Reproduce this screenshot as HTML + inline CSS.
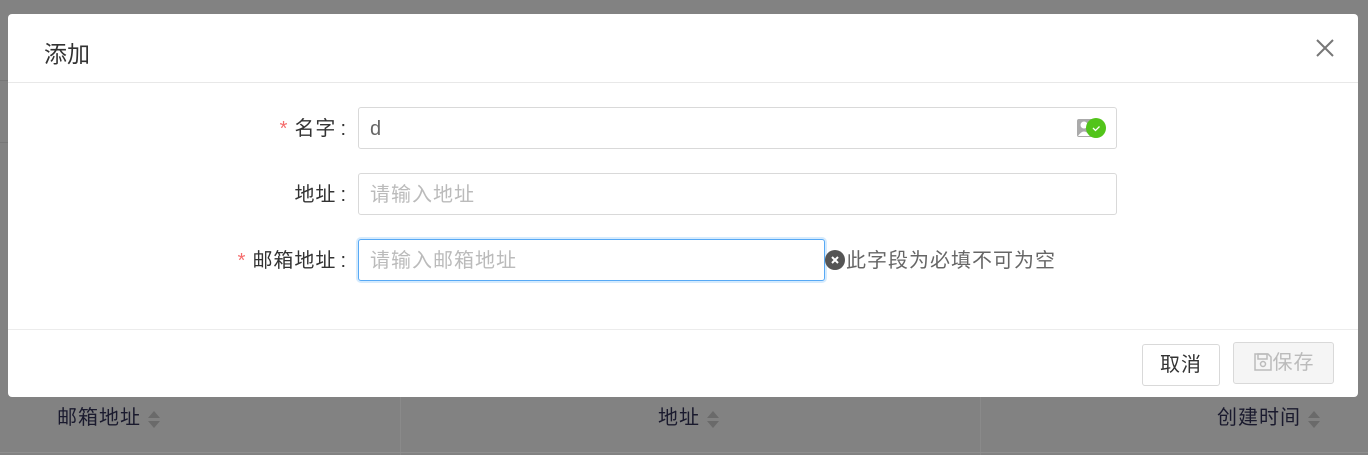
<!DOCTYPE html>
<html><head><meta charset="utf-8"><style>
body{margin:0;width:1368px;height:455px;background:#828282;position:relative;overflow:hidden;font-family:"Liberation Sans","Noto Sans CJK SC",sans-serif;}
.abs{position:absolute}
.modal{left:8px;top:14px;width:1350px;height:383px;background:#fff;border-radius:4px;}
.lbl{font-size:20px;letter-spacing:1px;color:#333;text-align:right;width:339px;left:0;line-height:28px}
.lbl i{font-style:normal;margin-left:4px}
.star{color:#f56c6c;margin-right:6px}
.inp{border:1px solid #d9d9d9;border-radius:3px;height:42px;box-sizing:border-box;font-size:20px;letter-spacing:1px;padding:0 11px;line-height:42px;color:#666;background:#fff}
.ph{color:#bbb}
.btn{border:1px solid #d9d9d9;border-radius:3px;font-size:20px;letter-spacing:1px;text-align:center;box-sizing:border-box;line-height:40px;height:42px}
.th{font-size:20px;letter-spacing:1px;color:#1a1a2e;top:401px}
</style></head><body>
<div class="abs" style="left:0;top:80px;width:8px;height:1px;background:#777"></div>
<div class="abs" style="left:0;top:142px;width:8px;height:1px;background:#777"></div>
<div class="abs" style="left:400px;top:397px;width:1px;height:58px;background:#8a8a8a"></div>
<div class="abs" style="left:980px;top:397px;width:1px;height:58px;background:#8a8a8a"></div>
<div class="abs" style="left:0;top:452px;width:1368px;height:1px;background:#8e8e8e"></div>
<div class="abs th" style="left:57px">邮箱地址<svg width="14" height="22" style="vertical-align:middle;margin-left:6px"><path d="M7 3 L13 10 H1Z M7 20 L13 13 H1Z" fill="#6a6a6a"/></svg></div>
<div class="abs th" style="left:658px">地址<svg width="14" height="22" style="vertical-align:middle;margin-left:6px"><path d="M7 3 L13 10 H1Z M7 20 L13 13 H1Z" fill="#6a6a6a"/></svg></div>
<div class="abs th" style="left:1217px">创建时间<svg width="14" height="22" style="vertical-align:middle;margin-left:6px"><path d="M7 3 L13 10 H1Z M7 20 L13 13 H1Z" fill="#6a6a6a"/></svg></div>

<div class="abs modal">
 <div class="abs" style="left:36px;top:21px;font-size:23px;color:#333">添加</div>
 <svg class="abs" style="left:1307px;top:24px" width="20" height="20"><path d="M2 2L18 18M18 2L2 18" stroke="#777" stroke-width="2"/></svg>
 <div class="abs" style="left:0;top:68px;width:1350px;height:1px;background:#e8e8e8"></div>
 <div class="abs lbl" style="top:101px"><span class="star">*</span>名字<i>:</i></div>
 <div class="abs inp" style="left:350px;top:93px;width:759px">d</div>
 <svg class="abs" style="left:1068px;top:103px" width="32" height="22"><rect x="1" y="2" width="18" height="18" rx="2" fill="#aaa"/><circle cx="8" cy="8" r="3.5" fill="#fff"/><path d="M2 19 Q8 10 14 19Z" fill="#fff"/><circle cx="20" cy="11" r="10" fill="#52c41a"/><path d="M17 11 l2.5 2.5 l4-4" stroke="#fff" stroke-width="1.3" fill="none"/></svg>
 <div class="abs lbl" style="top:167px">地址<i>:</i></div>
 <div class="abs inp ph" style="left:350px;top:159px;width:759px">请输入地址</div>
 <div class="abs lbl" style="top:233px"><span class="star">*</span>邮箱地址<i>:</i></div>
 <div class="abs inp ph" style="left:350px;top:225px;width:467px;border-color:#57a9f5;box-shadow:0 0 0 2px #d6ebfd">请输入邮箱地址</div>
 <svg class="abs" style="left:817px;top:236px" width="20" height="20"><circle cx="10" cy="10" r="10" fill="#555"/><path d="M7 7L13 13M13 7L7 13" stroke="#fff" stroke-width="2"/></svg>
 <div class="abs" style="left:838px;top:233px;font-size:20px;letter-spacing:1px;line-height:28px;color:#666">此字段为必填不可为空</div>
 <div class="abs" style="left:0;top:315px;width:1350px;height:1px;background:#ececec"></div>
 <div class="abs btn" style="left:1134px;top:330px;width:78px;color:#333">取消</div>
 <div class="abs btn" style="left:1225px;top:328px;width:101px;color:#bbb;background:#f5f5f5"><svg width="20" height="20" style="vertical-align:-3px"><path d="M2 2H15L18 5V18H2Z" stroke="#bbb" fill="none" stroke-width="1.5"/><rect x="5" y="2" width="9" height="5" stroke="#bbb" fill="none" stroke-width="1.5"/><circle cx="10" cy="12" r="2.5" stroke="#bbb" fill="none" stroke-width="1.5"/></svg>保存</div>
</div>
</body></html>
